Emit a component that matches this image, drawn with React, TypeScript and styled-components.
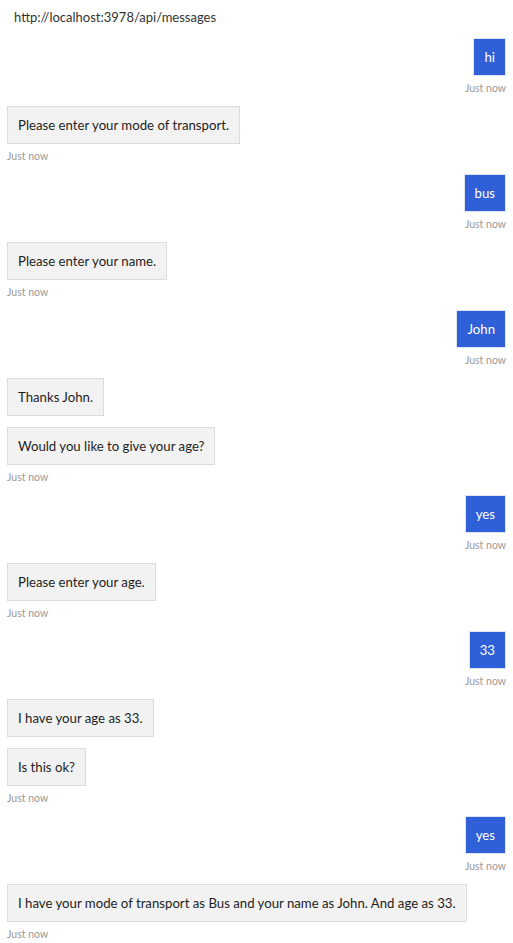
import React from 'react';
import styled, { createGlobalStyle } from 'styled-components';

type Sender = 'me' | 'bot';

interface IMessage {
  from: Sender;
  text: string;
  stamp?: boolean;
}

const messages: IMessage[] = [
  { from: 'me', text: 'hi', stamp: true },
  { from: 'bot', text: 'Please enter your mode of transport.', stamp: true },
  { from: 'me', text: 'bus', stamp: true },
  { from: 'bot', text: 'Please enter your name.', stamp: true },
  { from: 'me', text: 'John', stamp: true },
  { from: 'bot', text: 'Thanks John.' },
  { from: 'bot', text: 'Would you like to give your age?', stamp: true },
  { from: 'me', text: 'yes', stamp: true },
  { from: 'bot', text: 'Please enter your age.', stamp: true },
  { from: 'me', text: '33', stamp: true },
  { from: 'bot', text: 'I have your age as 33.' },
  { from: 'bot', text: 'Is this ok?', stamp: true },
  { from: 'me', text: 'yes', stamp: true },
  { from: 'bot', text: 'I have your mode of transport as Bus and your name as John. And age as 33.', stamp: true },
];

export default function App() {
  return (
    <>
      <GlobalStyle />
      <Chat>
        <Header>http://localhost:3978/api/messages</Header>
        <MessageList>
          {messages.map((m, i) => (
            <MessageGroup key={i} from={m.from}>
              <Bubble from={m.from}>{m.text}</Bubble>
              {m.stamp && <Timestamp>Just now</Timestamp>}
            </MessageGroup>
          ))}
        </MessageList>
      </Chat>
    </>
  );
}

const GlobalStyle = createGlobalStyle`
  html, body {
    margin: 0;
    padding: 0;
    background: #ffffff;
  }
  body {
    font-family: Lato, "Open Sans", "Liberation Sans", sans-serif;
  }
`;

const Chat = styled.div`
  display: flex;
  flex-direction: column;
  width: 513px;
  height: 943px;
  overflow: hidden;
  background: #fff;
`;

const Header = styled.div`
  padding: 8px 14px 0;
  height: 18px;
  line-height: 18px;
  font-size: 13px;
  color: #333;
`;

const MessageList = styled.div`
  display: flex;
  flex-direction: column;
  gap: 11px;
  padding: 12px 7px 0 7px;
`;

const MessageGroup = styled.div<{ from: Sender }>`
  display: flex;
  flex-direction: column;
  align-items: ${(p) => (p.from === 'me' ? 'flex-end' : 'flex-start')};
`;

const Bubble = styled.div<{ from: Sender }>`
  box-sizing: border-box;
  height: 38px;
  padding: 8px 10px;
  line-height: 20px;
  font-size: 13.2px;
  border: 1px solid ${(p) => (p.from === 'me' ? '#dfe4f4' : '#dcdcdc')};
  background: ${(p) => (p.from === 'me' ? '#3060d8' : '#f2f2f2')};
  color: ${(p) => (p.from === 'me' ? '#ffffff' : '#1e1e1e')};
  white-space: nowrap;
`;

const Timestamp = styled.div`
  padding-top: 5px;
  line-height: 14px;
  font-size: 10.5px;
  color: #999;
`;
